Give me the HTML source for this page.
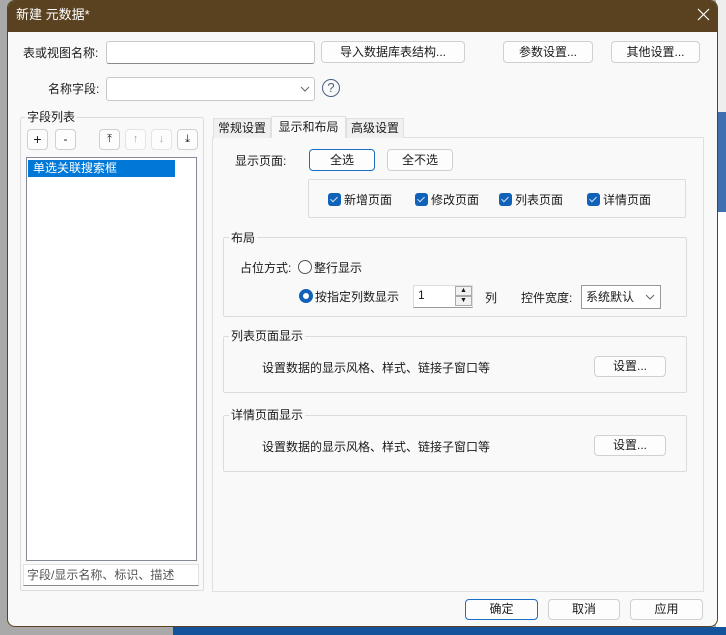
<!DOCTYPE html>
<html><head><meta charset="utf-8"><style>
*{box-sizing:border-box;margin:0;padding:0}
body{width:726px;height:635px;position:relative;overflow:hidden;background:#a9a9a9;font-family:"Liberation Sans","Noto Sans CJK SC",sans-serif;font-size:12px;color:#1a1a1a}
.a{position:absolute;white-space:nowrap}
.btn{position:absolute;background:#fdfdfd;border:1px solid #d0d0d0;border-radius:4px;text-align:center;font-size:12px;color:#1a1a1a}
.inp{position:absolute;background:#fff;border:1px solid #c8c8c8;border-bottom:1px solid #8a8a8a;border-radius:3px}
.grp{position:absolute;border:1px solid #dcdcdc;border-radius:2px}
.gt{position:absolute;top:-9px;left:5px;background:#f9f9f9;padding:0 2px;line-height:16px}
.cb{position:absolute;width:13px;height:13px;background:#0f62b8;border-radius:3px}
.cb:after{content:"";position:absolute;left:4px;top:2px;width:3px;height:6px;border:solid #cfe2f7;border-width:0 1.3px 1.3px 0;transform:rotate(45deg)}
</style></head><body>
<div class="a" style="left:173px;top:627px;width:553px;height:8px;background:#12539c"></div>
<div class="a" style="left:716px;top:0;width:10px;height:112px;background:#eee"></div>
<div class="a" style="left:716px;top:112px;width:10px;height:100px;background:#3f6faf"></div>
<div class="a" style="left:716px;top:212px;width:10px;height:415px;background:#fff"></div>
<div class="a" style="left:7px;top:0;width:711px;height:627px;background:#f9f9f9;border:1px solid #5a4222;border-radius:8px;overflow:hidden">
 <div class="a" style="left:0;top:0;width:711px;height:31px;background:#5a4120"></div>
</div>
<div class="a" style="left:16px;top:6px;color:#fff;font-size:13px;line-height:18px">新建 元数据*</div>
<svg class="a" style="left:697px;top:8px" width="13" height="13"><path d="M1 1L12 12M12 1L1 12" stroke="#fff" stroke-width="1.2"/></svg>

<div class="a" style="left:23px;top:44px">表或视图名称:</div>
<div class="inp" style="left:106px;top:41px;width:209px;height:23px"></div>
<div class="btn" style="left:321px;top:41px;width:144px;height:22px;line-height:20px">导入数据库表结构...</div>
<div class="btn" style="left:503px;top:41px;width:90px;height:22px;line-height:20px">参数设置...</div>
<div class="btn" style="left:611px;top:41px;width:89px;height:22px;line-height:20px">其他设置...</div>

<div class="a" style="left:48px;top:80px">名称字段:</div>
<div class="inp" style="left:106px;top:77px;width:209px;height:24px;border-bottom-color:#c8c8c8"></div>
<svg class="a" style="left:300px;top:86px" width="10" height="6"><path d="M1 1L5 5L9 1" stroke="#666" fill="none"/></svg>
<div class="a" style="left:322px;top:79px;width:18px;height:18px;border:1.5px solid #4a5f88;border-radius:50%;text-align:center;line-height:15px;color:#4a5f88;font-size:13px">?</div>

<div class="grp" style="left:20px;top:117px;width:184px;height:474px"><span class="gt" style="left:4px">字段列表</span></div>
<div class="btn" style="left:27px;top:129px;width:21px;height:21px;line-height:19px;font-size:14px">+</div>
<div class="btn" style="left:55px;top:129px;width:21px;height:21px;line-height:19px">-</div>
<div class="btn" style="left:99px;top:129px;width:21px;height:21px;line-height:19px;font-size:11px">⤒</div>
<div class="btn" style="left:125px;top:129px;width:21px;height:21px;line-height:19px;color:#c99;font-size:11px;border-color:#e4e4e4">↑</div>
<div class="btn" style="left:151px;top:129px;width:21px;height:21px;line-height:19px;color:#c99;font-size:11px;border-color:#e4e4e4">↓</div>
<div class="btn" style="left:177px;top:129px;width:21px;height:21px;line-height:19px;font-size:11px">⤓</div>
<div class="a" style="left:26px;top:157px;width:171px;height:404px;background:#fff;border:1px solid #858a99"></div>
<div class="a" style="left:28px;top:160px;width:147px;height:17px;background:#0078d7;color:#fff;line-height:17px;padding-left:5px">单选关联搜索框</div>
<div class="a" style="left:23px;top:564px;width:176px;height:22px;background:#fff;border:1px solid #e2e2e2;border-bottom:1px solid #888;line-height:20px;padding-left:3px;color:#555">字段/显示名称、标识、描述</div>

<div class="a" style="left:212px;top:137px;width:492px;height:455px;border:1px solid #e0e0e0;background:#f9f9f9"></div>
<div class="a" style="left:213px;top:118px;width:58px;height:20px;border:1px solid #e0e0e0;border-bottom:none;background:#f0f0f0;line-height:19px;text-align:center">常规设置</div>
<div class="a" style="left:271px;top:116px;width:75px;height:22px;border:1px solid #e0e0e0;border-bottom:none;background:#f9f9f9;line-height:20px;text-align:center">显示和布局</div>
<div class="a" style="left:346px;top:118px;width:58px;height:20px;border:1px solid #e0e0e0;border-bottom:none;background:#f0f0f0;line-height:19px;text-align:center">高级设置</div>

<div class="a" style="left:235px;top:152px">显示页面:</div>
<div class="btn" style="left:309px;top:149px;width:66px;height:22px;line-height:20px;border-color:#1a6fc4">全选</div>
<div class="btn" style="left:387px;top:149px;width:66px;height:22px;line-height:20px">全不选</div>
<div class="grp" style="left:308px;top:179px;width:378px;height:39px"></div>
<div class="cb" style="left:328px;top:193px"></div><div class="a" style="left:344px;top:191px">新增页面</div>
<div class="cb" style="left:415px;top:193px"></div><div class="a" style="left:431px;top:191px">修改页面</div>
<div class="cb" style="left:499px;top:193px"></div><div class="a" style="left:515px;top:191px">列表页面</div>
<div class="cb" style="left:587px;top:193px"></div><div class="a" style="left:603px;top:191px">详情页面</div>

<div class="grp" style="left:223px;top:237px;width:464px;height:80px"><span class="gt" style="top:-8px">布局</span></div>
<div class="a" style="left:240px;top:259px">占位方式:</div>
<div class="a" style="left:298px;top:260px;width:14px;height:14px;border:1px solid #555;border-radius:50%;background:#fff"></div>
<div class="a" style="left:314px;top:259px">整行显示</div>
<div class="a" style="left:299px;top:289px;width:14px;height:14px;border:4px solid #0f62b8;border-radius:50%;background:#fff"></div>
<div class="a" style="left:315px;top:288px">按指定列数显示</div>
<div class="a" style="left:413px;top:285px;width:60px;height:23px;background:#fff;border:1px solid #ddd;border-bottom-color:#999"></div>
<div class="a" style="left:418px;top:288px">1</div>
<div class="a" style="left:455px;top:286px;width:17px;height:10px;border:1px solid #aaa;background:#f2f2f2;font-size:7px;line-height:8px;text-align:center">▲</div>
<div class="a" style="left:455px;top:296px;width:17px;height:10px;border:1px solid #aaa;background:#f2f2f2;font-size:7px;line-height:8px;text-align:center">▼</div>
<div class="a" style="left:485px;top:289px">列</div>
<div class="a" style="left:521px;top:289px">控件宽度:</div>
<div class="a" style="left:581px;top:285px;width:80px;height:24px;background:#fff;border:1px solid #999;line-height:22px;padding-left:4px">系统默认</div>
<svg class="a" style="left:645px;top:294px" width="10" height="6"><path d="M1 1L5 5L9 1" stroke="#666" fill="none"/></svg>

<div class="grp" style="left:223px;top:336px;width:464px;height:57px"><span class="gt">列表页面显示</span></div>
<div class="a" style="left:262px;top:359px">设置数据的显示风格、样式、链接子窗口等</div>
<div class="btn" style="left:594px;top:356px;width:72px;height:21px;line-height:19px">设置...</div>
<div class="grp" style="left:223px;top:415px;width:464px;height:57px"><span class="gt">详情页面显示</span></div>
<div class="a" style="left:262px;top:438px">设置数据的显示风格、样式、链接子窗口等</div>
<div class="btn" style="left:594px;top:435px;width:72px;height:21px;line-height:19px">设置...</div>

<div class="btn" style="left:465px;top:599px;width:73px;height:21px;line-height:19px;border-color:#1a6fc4">确定</div>
<div class="btn" style="left:548px;top:599px;width:72px;height:21px;line-height:19px">取消</div>
<div class="btn" style="left:630px;top:599px;width:73px;height:21px;line-height:19px">应用</div>
</body></html>
